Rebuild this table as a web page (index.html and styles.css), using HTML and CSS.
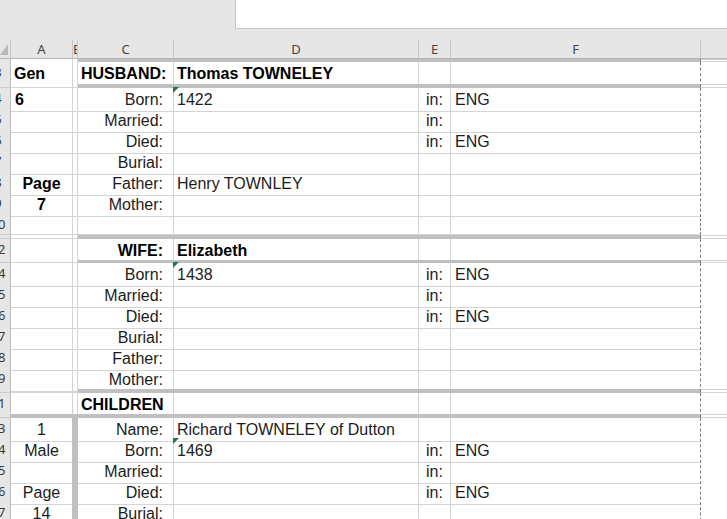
FILE: index.html
```html
<!DOCTYPE html>
<html>
<head>
<meta charset="utf-8">
<link rel="stylesheet" href="styles.css">
</head>
<body>
<div class="top"><div class="fbar"></div></div>
<div class="sheet">
  <div class="row hdr">
    <div class="rn corner"><span class="tri"></span></div>
    <div class="ch">A</div><div class="ch chb">B</div><div class="ch">C</div><div class="ch">D</div><div class="ch">E</div><div class="ch">F</div><div class="ch chg"></div>
  </div>

  <div class="row band h3">
    <div class="rn nb"></div><div class="nb"></div><div class="nb"></div>
    <div class="fill"></div><div class="fill"></div><div class="fill"></div><div class="fill f"></div><div class="g gl"></div>
  </div>
  <div class="row h22">
    <div class="rn nb"><span>3</span></div><div class="nb bold pl">Gen</div><div class="nb"></div>
    <div class="bold pl">HUSBAND:</div><div class="bold val">Thomas TOWNELEY</div><div></div><div class="f"></div><div class="g"></div>
  </div>
  <div class="row band h4">
    <div class="rn"></div><div></div><div></div>
    <div class="fill"></div><div class="fill"></div><div class="fill"></div><div class="fill f"></div><div class="g gl"></div>
  </div>

  <div class="row"><div class="rn"><span>4</span></div><div class="bold pl2">6</div><div></div><div class="lbl">Born:</div><div class="val tick">1422</div><div class="in">in:</div><div class="f val">ENG</div><div class="g"></div></div>
  <div class="row"><div class="rn"><span>5</span></div><div></div><div></div><div class="lbl">Married:</div><div class="val"></div><div class="in">in:</div><div class="f val"></div><div class="g"></div></div>
  <div class="row"><div class="rn"><span>6</span></div><div></div><div></div><div class="lbl">Died:</div><div class="val"></div><div class="in">in:</div><div class="f val">ENG</div><div class="g"></div></div>
  <div class="row"><div class="rn"><span>7</span></div><div></div><div></div><div class="lbl">Burial:</div><div class="val"></div><div></div><div class="f"></div><div class="g"></div></div>
  <div class="row"><div class="rn"><span>8</span></div><div class="bold ctr">Page</div><div></div><div class="lbl">Father:</div><div class="val">Henry TOWNLEY</div><div></div><div class="f"></div><div class="g"></div></div>
  <div class="row"><div class="rn"><span>9</span></div><div class="bold ctr">7</div><div></div><div class="lbl">Mother:</div><div class="val"></div><div></div><div class="f"></div><div class="g"></div></div>
  <div class="row"><div class="rn"><span>10</span></div><div></div><div></div><div></div><div></div><div></div><div class="f"></div><div class="g"></div></div>

  <div class="row band h4">
    <div class="rn"></div><div></div><div></div>
    <div class="fill"></div><div class="fill"></div><div class="fill"></div><div class="fill f"></div><div class="g gl"></div>
  </div>
  <div class="row"><div class="rn"><span>12</span></div><div></div><div></div><div class="lbl bold">WIFE:</div><div class="val bold">Elizabeth</div><div></div><div class="f"></div><div class="g"></div></div>
  <div class="row band h3">
    <div class="rn"></div><div></div><div></div>
    <div class="fill"></div><div class="fill"></div><div class="fill"></div><div class="fill f"></div><div class="g gl"></div>
  </div>

  <div class="row"><div class="rn"><span>14</span></div><div></div><div></div><div class="lbl">Born:</div><div class="val tick">1438</div><div class="in">in:</div><div class="f val">ENG</div><div class="g"></div></div>
  <div class="row"><div class="rn"><span>15</span></div><div></div><div></div><div class="lbl">Married:</div><div class="val"></div><div class="in">in:</div><div class="f val"></div><div class="g"></div></div>
  <div class="row"><div class="rn"><span>16</span></div><div></div><div></div><div class="lbl">Died:</div><div class="val"></div><div class="in">in:</div><div class="f val">ENG</div><div class="g"></div></div>
  <div class="row"><div class="rn"><span>17</span></div><div></div><div></div><div class="lbl">Burial:</div><div class="val"></div><div></div><div class="f"></div><div class="g"></div></div>
  <div class="row"><div class="rn"><span>18</span></div><div></div><div></div><div class="lbl">Father:</div><div class="val"></div><div></div><div class="f"></div><div class="g"></div></div>
  <div class="row"><div class="rn"><span>19</span></div><div></div><div></div><div class="lbl">Mother:</div><div class="val"></div><div></div><div class="f"></div><div class="g"></div></div>

  <div class="row band h4">
    <div class="rn"></div><div></div><div></div>
    <div class="fill"></div><div class="fill"></div><div class="fill"></div><div class="fill f"></div><div class="g gl"></div>
  </div>
  <div class="row"><div class="rn"><span>21</span></div><div></div><div></div><div class="bold pl">CHILDREN</div><div></div><div></div><div class="f"></div><div class="g"></div></div>
  <div class="row band h4">
    <div class="rn"></div><div class="fill"></div><div class="fill"></div>
    <div class="fill"></div><div class="fill"></div><div class="fill"></div><div class="fill f"></div><div class="g gl"></div>
  </div>

  <div class="row kid"><div class="rn"><span>23</span></div><div class="ctr">1</div><div class="gb"></div><div class="lbl">Name:</div><div class="val">Richard TOWNELEY of Dutton</div><div></div><div class="f"></div><div class="g"></div></div>
  <div class="row kid"><div class="rn"><span>24</span></div><div class="ctr">Male</div><div class="gb"></div><div class="lbl">Born:</div><div class="val tick">1469</div><div class="in">in:</div><div class="f val">ENG</div><div class="g"></div></div>
  <div class="row kid"><div class="rn"><span>25</span></div><div class="ctr"></div><div class="gb"></div><div class="lbl">Married:</div><div class="val"></div><div class="in">in:</div><div class="f val"></div><div class="g"></div></div>
  <div class="row kid"><div class="rn"><span>26</span></div><div class="ctr">Page</div><div class="gb"></div><div class="lbl">Died:</div><div class="val"></div><div class="in">in:</div><div class="f val">ENG</div><div class="g"></div></div>
  <div class="row kid"><div class="rn"><span>27</span></div><div class="ctr">14</div><div class="gb"></div><div class="lbl">Burial:</div><div class="val"></div><div></div><div class="f"></div><div class="g"></div></div>
</div>
</body>
</html>
```

FILE: styles.css
```css
html, body {
  margin: 0;
  padding: 0;
  background: #ffffff;
  overflow: hidden;
}
body {
  width: 727px;
  height: 519px;
  font-family: "Liberation Sans", Arial, sans-serif;
  font-size: 16px;
  color: #1c1c1c;
}
.top {
  height: 40px;
  background: #e6e6e6;
}
.fbar {
  margin-left: 235px;
  height: 29px;
  background: #ffffff;
  border-left: 1px solid #c6c6c6;
  border-bottom: 1px solid #c6c6c6;
  box-sizing: border-box;
}
.sheet {
  display: flex;
  flex-direction: column;
}
.row {
  display: grid;
  grid-template-columns: 11px 62px 5px 96px 245px 32px 250px 1fr;
  height: 21px;
  flex: none;
}
.row > div {
  box-sizing: border-box;
  border-right: 1px solid #d4d4d4;
  border-bottom: 1px solid #d4d4d4;
  white-space: nowrap;
  line-height: 23px;
  position: relative;
}
.h22 { height: 22px; }
.h22 > div { line-height: 24px; }
.h3 { height: 3px; }
.h4 { height: 4px; }

.hdr { height: 19px; }
.row.hdr > div {
  background: #e6e6e6;
  border-right-color: #c8c8c8;
  border-bottom-color: #b4b4b4;
  font-family: "Noto Sans", "Open Sans", sans-serif;
  font-size: 13px;
  line-height: 18px;
  color: #444444;
  text-align: center;
}
.row.hdr > .chb {
  overflow: hidden;
  text-align: left;
}
.row.hdr > .chg { border-right: none; }
.corner .tri {
  position: absolute;
  right: 2px;
  bottom: 3px;
  width: 0;
  height: 0;
  border-left: 8px solid transparent;
  border-bottom: 11px solid #b9b9b9;
}

.rn {
  background: #e6e6e6;
  overflow: hidden;
  font-family: "Noto Sans", "Open Sans", sans-serif;
  font-size: 13px;
  color: #3a3a3a;
}
.row > .rn {
  border-right-color: #bdbdbd;
  border-bottom-color: #cccccc;
  line-height: 21px;
}
.rn span {
  display: block;
  width: 24px;
  margin-left: -14px;
  text-align: center;
}
.row > .nb { border-bottom: none; }

.row.band > div { line-height: 0; }
.row > .fill {
  background: #c0c0c0;
  border-right-color: #c0c0c0;
  border-bottom-color: #c0c0c0;
}
.row > .f { border-right: 1px dashed #7a7a7a; }
.row > .g {
  border-right: none;
  border-bottom: none;
}
.row > .gl {
  border-top: 1px solid #d4d4d4;
  border-bottom: 1px solid #d4d4d4;
}

.bold { font-weight: bold; color: #000000; }
.pl { padding-left: 3px; }
.pl2 { padding-left: 4px; }
.ctr { text-align: center; }
.lbl { text-align: right; padding-right: 10px; }
.val { padding-left: 3px; }
.in { text-align: center; }
.row > .f.val { padding-left: 4px; }

.tick::before {
  content: "";
  position: absolute;
  left: -1px;
  top: -1px;
  width: 0;
  height: 0;
  border-top: 6px solid #1f7a3c;
  border-right: 6px solid transparent;
}

.kid > div:nth-child(2) { border-right-color: #c0c0c0; }
.row > .gb {
  background: #c0c0c0;
  border-right-color: #c0c0c0;
  border-bottom-color: #c0c0c0;
}
```
